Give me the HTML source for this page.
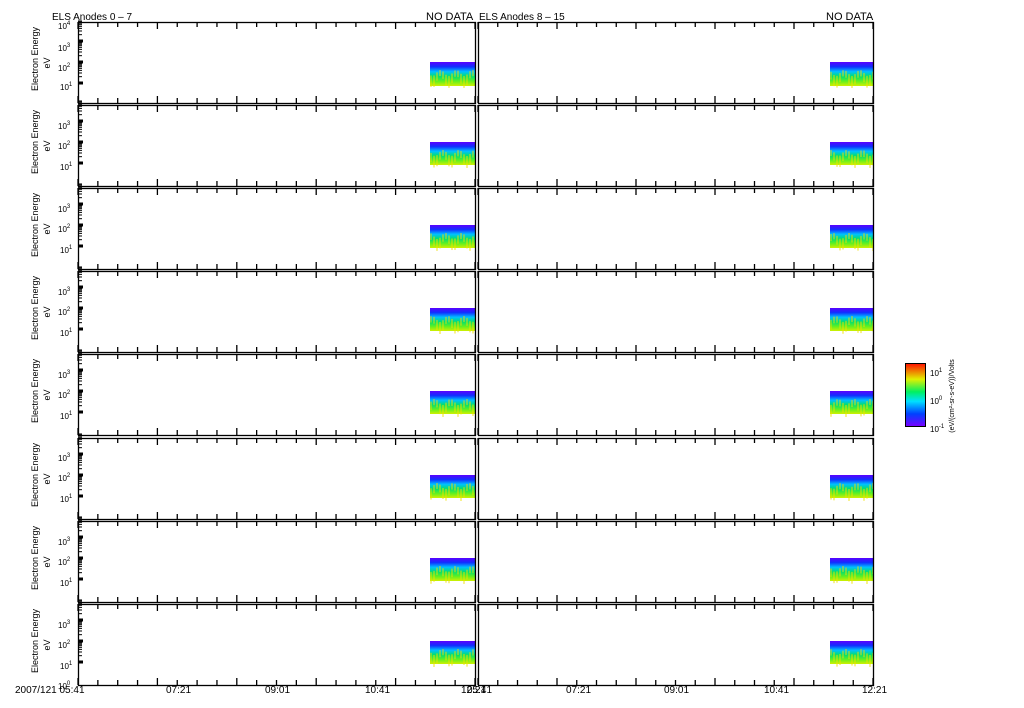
<!DOCTYPE html>
<html><head><meta charset="utf-8"><style>
body{margin:0;background:#fff;width:1024px;height:708px;overflow:hidden;position:relative;font-family:"Liberation Sans",sans-serif;}
.t{position:absolute;font-size:10px;color:#000;white-space:nowrap;line-height:10px;}
.y{position:absolute;font-size:8px;white-space:nowrap;line-height:8px;}
.y sup{font-size:6px;vertical-align:4px;}
.rot{position:absolute;transform:rotate(-90deg);transform-origin:center;font-size:9px;white-space:nowrap;text-align:center;line-height:10px;}
</style></head><body>
<svg id="s" width="1024" height="708" style="position:absolute;left:0;top:0">
<defs>
<linearGradient id="g" x1="0" y1="0" x2="0" y2="1">
<stop offset="0" stop-color="#5a00ff"/><stop offset="0.2" stop-color="#1030ff"/><stop offset="0.4" stop-color="#00c0ff"/><stop offset="0.6" stop-color="#00e070"/><stop offset="0.8" stop-color="#60f020"/><stop offset="1" stop-color="#d0f000"/>
</linearGradient>
<linearGradient id="cb" x1="0" y1="1" x2="0" y2="0">
<stop offset="0" stop-color="#7a00ff"/><stop offset="0.2" stop-color="#0040ff"/><stop offset="0.4" stop-color="#00e0ff"/><stop offset="0.55" stop-color="#00f060"/><stop offset="0.75" stop-color="#e0f000"/><stop offset="1" stop-color="#ff1000"/>
</linearGradient>
</defs>
</svg>
<div class="t" style="left:52px;top:13px">ELS Anodes 0 – 7</div>
<div class="t" style="left:426px;top:12px;font-size:11px">NO DATA</div>
<div class="t" style="left:479px;top:13px">ELS Anodes 8 – 15</div>
<div class="t" style="left:826px;top:12px;font-size:11px">NO DATA</div>
<div id="lab"></div>
<div class="t" style="left:15px;top:686px">2007/121 05:41</div>
<div class="t" style="left:166px;top:686px">07:21</div>
<div class="t" style="left:265px;top:686px">09:01</div>
<div class="t" style="left:365px;top:686px">10:41</div>
<div class="t" style="left:461px;top:686px">12:21</div>
<div class="t" style="left:467px;top:686px">05:41</div>
<div class="t" style="left:566px;top:686px">07:21</div>
<div class="t" style="left:664px;top:686px">09:01</div>
<div class="t" style="left:764px;top:686px">10:41</div>
<div class="t" style="left:862px;top:686px">12:21</div>
<div class="y" style="left:930px;top:367px">10<sup>1</sup></div>
<div class="y" style="left:930px;top:395px">10<sup>0</sup></div>
<div class="y" style="left:930px;top:423px">10<sup>-1</sup></div>
<div class="rot" style="left:903px;top:391px;width:100px;font-size:7px">(eV/(cm²-sr-s-eV))/Volts</div>
<div class="rot" style="left:-5px;top:54px;width:80px">Electron Energy</div><div class="rot" style="left:7px;top:58px;width:80px">eV</div>
<div class="rot" style="left:-5px;top:137px;width:80px">Electron Energy</div><div class="rot" style="left:7px;top:141px;width:80px">eV</div>
<div class="rot" style="left:-5px;top:220px;width:80px">Electron Energy</div><div class="rot" style="left:7px;top:224px;width:80px">eV</div>
<div class="rot" style="left:-5px;top:303px;width:80px">Electron Energy</div><div class="rot" style="left:7px;top:307px;width:80px">eV</div>
<div class="rot" style="left:-5px;top:386px;width:80px">Electron Energy</div><div class="rot" style="left:7px;top:390px;width:80px">eV</div>
<div class="rot" style="left:-5px;top:470px;width:80px">Electron Energy</div><div class="rot" style="left:7px;top:474px;width:80px">eV</div>
<div class="rot" style="left:-5px;top:553px;width:80px">Electron Energy</div><div class="rot" style="left:7px;top:557px;width:80px">eV</div>
<div class="rot" style="left:-5px;top:636px;width:80px">Electron Energy</div><div class="rot" style="left:7px;top:640px;width:80px">eV</div>
<div class="y" style="left:58px;top:20px">10<sup>4</sup></div><div class="y" style="left:58px;top:42px">10<sup>3</sup></div><div class="y" style="left:58px;top:62px">10<sup>2</sup></div><div class="y" style="left:60px;top:81px">10<sup>1</sup></div>
<div class="y" style="left:58px;top:120px">10<sup>3</sup></div><div class="y" style="left:58px;top:140px">10<sup>2</sup></div><div class="y" style="left:60px;top:161px">10<sup>1</sup></div>
<div class="y" style="left:58px;top:203px">10<sup>3</sup></div><div class="y" style="left:58px;top:223px">10<sup>2</sup></div><div class="y" style="left:60px;top:244px">10<sup>1</sup></div>
<div class="y" style="left:58px;top:286px">10<sup>3</sup></div><div class="y" style="left:58px;top:306px">10<sup>2</sup></div><div class="y" style="left:60px;top:327px">10<sup>1</sup></div>
<div class="y" style="left:58px;top:369px">10<sup>3</sup></div><div class="y" style="left:58px;top:389px">10<sup>2</sup></div><div class="y" style="left:60px;top:410px">10<sup>1</sup></div>
<div class="y" style="left:58px;top:452px">10<sup>3</sup></div><div class="y" style="left:58px;top:472px">10<sup>2</sup></div><div class="y" style="left:60px;top:493px">10<sup>1</sup></div>
<div class="y" style="left:58px;top:536px">10<sup>3</sup></div><div class="y" style="left:58px;top:556px">10<sup>2</sup></div><div class="y" style="left:60px;top:577px">10<sup>1</sup></div>
<div class="y" style="left:58px;top:619px">10<sup>3</sup></div><div class="y" style="left:58px;top:639px">10<sup>2</sup></div><div class="y" style="left:60px;top:660px">10<sup>1</sup></div><div class="y" style="left:58px;top:680px">10<sup>0</sup></div>
<script>
var s=document.getElementById('s'),h='';
function L(x1,y1,x2,y2,w){h+='<line x1="'+x1+'" y1="'+y1+'" x2="'+x2+'" y2="'+y2+'" stroke="#000" stroke-width="'+(w||1)+'"/>';}
var cols=[[78,475],[478,873]];
for(var i=0;i<8;i++){var t=Math.round(22+i*83.1),b=t+81;
 cols.forEach(function(c,ci){
  var x0=c[0],x1=c[1];
  var by0=i==0?t+40:t+37,by1=i==0?t+64:t+60;
  var dx=ci==0?430:830;
  h+='<rect x="'+dx+'" y="'+by0+'" width="'+(x1-dx)+'" height="'+(by1-by0)+'" fill="url(#g)"/>';
  for(var k=dx;k<x1;k+=3){var r=Math.sin(k*1.7+i)*0.5+0.5;h+='<rect x="'+k+'" y="'+(by0+8+r*6)+'" width="2" height="'+(6+r*6)+'" fill="#f0e000" opacity="0.45"/>';}
  h+='<rect x="'+x0+'.5" y="'+t+'.5" width="'+(x1-x0)+'" height="81" fill="none" stroke="#000" stroke-width="1.3"/>';
  for(var m=0;m<=20;m++){var x=x0+m*(x1-x0)/20,len=(m%4==0)?7:5;L(x,t,x,t+len,1.3);L(x,b,x,b-len,1.3);}
  if(ci==0){var ys=[16,37,58];for(var q=0;q<3;q++){var yy=t+ys[q]+(i==0?3:0);L(x0,yy,x0+5,yy,3);for(var z=1;z<9;z++){var yz=yy-Math.log10(z+1)*21;L(x0,yz,x0+4,yz,1);}}}
 });
}
h+='<rect x="905.5" y="363.5" width="20" height="63" fill="url(#cb)" stroke="#000"/>';
s.innerHTML+=h;
</script>
</body></html>
